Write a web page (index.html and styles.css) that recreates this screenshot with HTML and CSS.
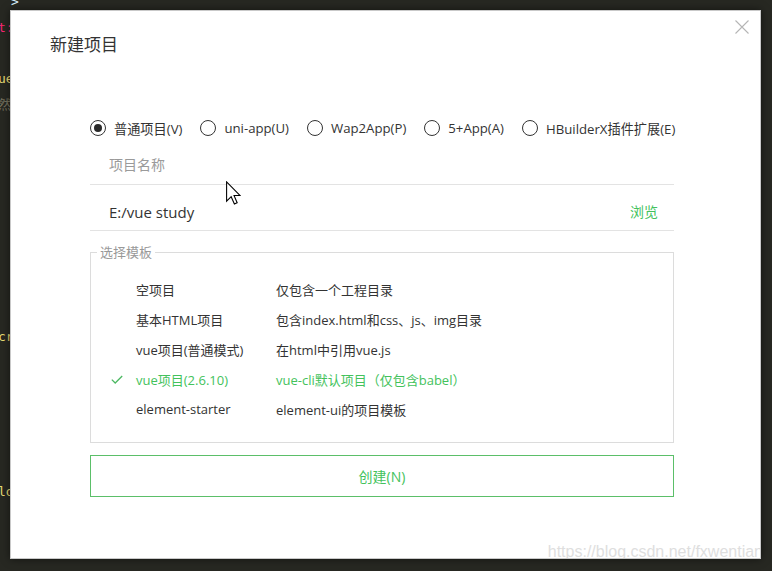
FILE: index.html
```html
<!DOCTYPE html>
<html lang="zh-CN">
<head>
<meta charset="utf-8">
<title>新建项目</title>
<link rel="stylesheet" href="styles.css">
</head>
<body>
<div class="editor">
  <div class="line"><span class="indent"></span><span class="c-blue">&gt;</span></div>
  <div class="line"><span class="c-pink">t:</span></div>
  <div class="line"></div>
  <div class="line"><span class="c-yellow">ue</span></div>
  <div class="line"><span class="c-gray">然后</span></div>
  <div class="line"></div>
  <div class="line"></div>
  <div class="line"></div>
  <div class="line"></div>
  <div class="line"></div>
  <div class="line"></div>
  <div class="line"></div>
  <div class="line"></div>
  <div class="line"><span class="c-yellow">cr</span></div>
  <div class="line"></div>
  <div class="line"></div>
  <div class="line"></div>
  <div class="line"></div>
  <div class="line"></div>
  <div class="line"><span class="c-yellow">lo</span></div>
</div>

<div class="dialog">
  <h1 class="title">新建项目</h1>
  <button class="close" aria-label="关闭">
    <svg width="14" height="14" viewBox="0 0 14 14"><path d="M0.5 0.5 L13.5 13.5 M13.5 0.5 L0.5 13.5" stroke="#b5b5b5" stroke-width="1.1" fill="none"/></svg>
  </button>

  <div class="content">
    <div class="radios">
      <label class="radio"><span class="dot checked"></span>普通项目(V)</label>
      <label class="radio"><span class="dot"></span>uni-app(U)</label>
      <label class="radio"><span class="dot"></span>Wap2App(P)</label>
      <label class="radio"><span class="dot"></span>5+App(A)</label>
      <label class="radio"><span class="dot"></span>HBuilderX插件扩展(E)</label>
    </div>

    <div class="field name"><span class="placeholder">项目名称</span></div>
    <div class="field path"><span class="path-text">E:/vue study</span><span class="browse">浏览</span></div>

    <fieldset class="templates">
      <legend>选择模板</legend>
      <div class="tpl"><span class="mark"></span><span>空项目</span><span>仅包含一个工程目录</span></div>
      <div class="tpl"><span class="mark"></span><span>基本HTML项目</span><span>包含index.html和css、js、img目录</span></div>
      <div class="tpl"><span class="mark"></span><span>vue项目(普通模式)</span><span>在html中引用vue.js</span></div>
      <div class="tpl selected"><span class="mark"><svg width="12" height="9" viewBox="0 0 12 9"><path d="M0.8 4.6 L4.2 8 L11.2 1" stroke="#4cb862" stroke-width="1.3" fill="none"/></svg></span><span>vue项目(2.6.10)</span><span>vue-cli默认项目（仅包含babel）</span></div>
      <div class="tpl"><span class="mark"></span><span>element-starter</span><span>element-ui的项目模板</span></div>
    </fieldset>

    <button class="create">创建(N)</button>
  </div>

  <div class="watermark">https://blog.csdn.net/fxwentian</div>
</div>

<svg class="cursor" width="15" height="24" viewBox="0 0 12.5 19.5"><path d="M0.5 0.5 L0.5 16.5 L4.3 12.8 L7 18.9 L9.3 17.9 L6.7 11.9 L11.8 11.9 Z" fill="#fff" stroke="#000" stroke-width="0.9" stroke-linejoin="miter"/></svg>
</body>
</html>
```

FILE: styles.css
```css
html, body {
  margin: 0;
  padding: 0;
}
body {
  width: 772px;
  height: 571px;
  overflow: hidden;
  background: #272822;
  position: relative;
  font-family: "Open Sans", "Noto Sans CJK SC", sans-serif;
}

.editor {
  margin-top: -11px;
  margin-left: -2px;
  font-family: "DejaVu Sans Mono", "Noto Sans CJK SC", monospace;
  font-size: 13px;
}
.line {
  height: 25.8px;
  line-height: 25.8px;
  white-space: pre;
}
.indent { display: inline-block; width: 13px; }
.c-blue { color: #d8f0ff; }
.c-pink { color: #f92672; }
.c-yellow { color: #e6db74; }
.c-gray { color: #75715e; }

.dialog {
  position: absolute;
  left: 10px;
  top: 10px;
  width: 751px;
  height: 549px;
  box-sizing: border-box;
  background: #fff;
  border: 1px solid #c9c9c9;
  box-shadow: 0 0 8px rgba(0, 0, 0, 0.55);
  padding: 23px 39px 0;
  overflow: hidden;
}

.title {
  margin: 0;
  font-size: 17px;
  font-weight: normal;
  line-height: 22px;
  color: #333;
}

.close {
  position: absolute;
  top: 9px;
  right: 11px;
  width: 14px;
  height: 14px;
  padding: 0;
  border: 0;
  background: none;
  display: block;
}
.close svg { display: block; }

.content {
  margin: 62px 0 0 40px;
  width: 584px;
}

.radios {
  display: flex;
  align-items: center;
  gap: 18px;
  height: 20px;
  font-size: 13.2px;
  color: #333;
}
.radio {
  display: flex;
  align-items: center;
  gap: 8px;
  white-space: nowrap;
}
.dot {
  width: 16px;
  height: 16px;
  box-sizing: border-box;
  border: 1.5px solid #333;
  border-radius: 50%;
  display: flex;
  align-items: center;
  justify-content: center;
}
.dot.checked::after {
  content: "";
  width: 8px;
  height: 8px;
  border-radius: 50%;
  background: #2a2a2a;
}

.field {
  display: flex;
  align-items: flex-start;
  justify-content: space-between;
  border-bottom: 1px solid #e3e3e3;
  padding: 0 16px 0 19px;
}
.field.name {
  margin-top: 8px;
  height: 38px;
  line-height: 38px;
}
.placeholder {
  font-size: 14px;
  color: #9a9a9a;
}
.field.path {
  box-sizing: border-box;
  height: 46px;
  padding-top: 16px;
  line-height: 22px;
}
.path-text {
  font-size: 15px;
  color: #333;
}
.browse {
  font-size: 14px;
  color: #43c25c;
}

.templates {
  margin: 13px 0 0;
  padding: 14px 0 18px;
  border: 1px solid #dcdcdc;
  min-width: 0;
}
.templates legend {
  margin-left: 6px;
  padding: 0 3px;
  font-size: 13px;
  line-height: 16px;
  color: #999;
}
.tpl {
  display: grid;
  grid-template-columns: 25px 140px 1fr;
  align-items: center;
  height: 30px;
  padding-left: 20px;
  font-size: 13px;
  color: #333;
  white-space: nowrap;
}
.tpl.selected { color: #43c25c; }
.mark svg { display: block; }

.create {
  display: block;
  width: 100%;
  height: 42px;
  margin-top: 12px;
  box-sizing: border-box;
  border: 1px solid #5bbf69;
  background: #fff;
  color: #43c25c;
  font-family: inherit;
  font-size: 14px;
  padding: 0;
}

.watermark {
  position: absolute;
  right: -3px;
  bottom: -4px;
  font-family: "Liberation Sans", sans-serif;
  font-size: 16px;
  line-height: 20px;
  color: #dedede;
  white-space: nowrap;
}

.cursor {
  position: absolute;
  left: 226px;
  top: 181px;
}
```
